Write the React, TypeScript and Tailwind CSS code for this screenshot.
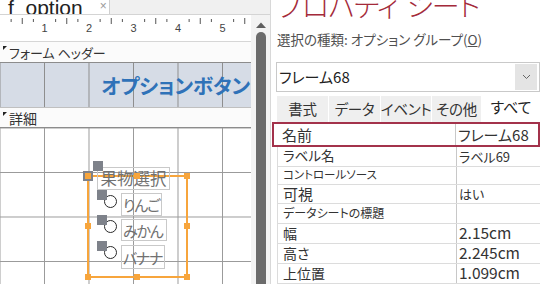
import React from "react";

const font = "[font-family:'Noto_Sans_CJK_JP','Liberation_Sans',sans-serif] [font-feature-settings:'palt']";

type Row = { name: string; value: string; h: string; ns: string; vs: string; hl?: boolean };

const rows: Row[] = [
  { name: "名前", value: "フレーム68", h: "h-[25px]", ns: "text-[15px]", vs: "text-[15px]", hl: true },
  { name: "ラベル名", value: "ラベル69", h: "h-[20px]", ns: "text-[13.5px]", vs: "text-[13px]" },
  { name: "コントロールソース", value: "", h: "h-[18px]", ns: "text-[11.5px]", vs: "text-[13px]" },
  { name: "可視", value: "はい", h: "h-[19px]", ns: "text-[15px]", vs: "text-[13px]" },
  { name: "データシートの標題", value: "", h: "h-[20px]", ns: "text-[12px]", vs: "text-[13px]" },
  { name: "幅", value: "2.15cm", h: "h-[20px]", ns: "text-[14px]", vs: "text-[15.5px]" },
  { name: "高さ", value: "2.245cm", h: "h-[20px]", ns: "text-[14px]", vs: "text-[15.5px]" },
  { name: "上位置", value: "1.099cm", h: "h-[20px]", ns: "text-[14px]", vs: "text-[15.5px]" },
];

function Ruler() {
  const ticks: React.ReactNode[] = [];
  const step = 44.5;
  for (let i = 0; i < 6; i++) {
    const base = i * step;
    [0.25, 0.5, 0.75].forEach((f, k) => {
      const x = base + f * step;
      const long = k === 1;
      ticks.push(
        <line key={`${i}-${k}`} x1={x} x2={x} y1={long ? 2 : 3} y2={long ? 8 : 6} stroke="#555" strokeWidth={1} />
      );
    });
    if (i > 0) {
      ticks.push(
        <text key={`n${i}`} x={base} y={16} fontSize={11} fill="#444" textAnchor="middle" fontFamily="Liberation Sans, sans-serif">
          {i}
        </text>
      );
    }
  }
  return (
    <svg width="251" height="26" className="block">
      {ticks}
    </svg>
  );
}

function Handle({ x, y }: { x: number; y: number }) {
  return <div className="absolute h-[6px] w-[6px] bg-[#f7a53c]" style={{ left: x - 3, top: y - 3 }} />;
}

export default function App() {
  const hy = [48, 98, 149];
  const hx = [88, 137, 187];
  return (
    <div className={`flex h-[284px] w-[540px] overflow-hidden bg-white ${font}`}>
      {/* Left design pane */}
      <div className="flex w-[270px] flex-col">
        <div className="flex h-[15px] border-b border-[#d4d4d4] bg-[#f0f0f0]">
          <div className="flex h-[14px] w-[110px] items-end overflow-hidden border-r border-[#cfcfcf] bg-white">
            <span className="ml-[8px] mb-[-4px] whitespace-nowrap text-[21px] leading-none text-[#222] [font-family:'Liberation_Sans',sans-serif]">f_option</span>
            <span className="ml-[17px] mb-[2px] text-[12px] leading-none text-[#9a9a9a] [font-family:'Liberation_Sans',sans-serif]">×</span>
          </div>
        </div>
        <div className="flex flex-1">
          <div className="flex w-[251px] flex-col">
            <div className="h-[27px] border-b border-[#d6d6d6] bg-white pt-[1px]">
              <Ruler />
            </div>
            <div className="flex h-[21px] items-center border-b border-[#8c8c8c] bg-[#fbfbfb]">
              <span className="ml-[3px] mb-[8px] h-0 w-0 border-t-[4px] border-r-[4px] border-t-[#222] border-r-transparent" />
              <span className="ml-[2px] whitespace-nowrap text-[13px] leading-none text-[#333]">フォーム ヘッダー</span>
            </div>
            <div className="flex h-[44px] items-center justify-end bg-[#d6dce6] bg-[linear-gradient(to_right,#8e8e8e_1px,transparent_1px)] [background-size:44.5px_44.5px] [background-position:44px_0] pr-[1px]">
              <span className="whitespace-nowrap text-[20.5px] font-bold leading-none text-[#2f72b8] [letter-spacing:-0.2px]">オプションボタン</span>
            </div>
            <div className="flex h-[21px] items-center border-b border-t border-[#8c8c8c] border-t-[#c0c0c0] bg-[#fbfbfb]">
              <span className="ml-[3px] mb-[8px] h-0 w-0 border-t-[4px] border-r-[4px] border-t-[#222] border-r-transparent" />
              <span className="ml-[2px] text-[14px] leading-none text-[#333]">詳細</span>
            </div>
            <div className="relative flex-1 bg-white bg-[linear-gradient(to_right,#9a9a9a_1px,transparent_1px),linear-gradient(to_bottom,#9a9a9a_1px,transparent_1px)] [background-size:44.5px_44.5px] [background-position:44px_44px]">
              {/* option group frame */}
              <div className="absolute left-[87px] top-[47px] h-[103px] w-[101px] border-2 border-[#f7a53c]" />
              {/* label */}
              <div className="absolute left-[97px] top-[39px] flex h-[23px] w-[73px] items-center justify-center whitespace-nowrap border border-[#c9c9c9] text-[16.5px] leading-none text-[#717171]">
                果物選択
              </div>
              <div className="absolute left-[93px] top-[33px] h-[10px] w-[10px] bg-[#7e828a]" />
              <div className="absolute left-[83px] top-[43px] h-[10px] w-[10px] bg-[#7e828a]" />
              {[
                { t: 65, w: 41, h: 23, c: 67, s: 62, label: "りんご" },
                { t: 91, w: 46, h: 22, c: 92, s: 87, label: "みかん" },
                { t: 117, w: 44, h: 24, c: 118, s: 113, label: "バナナ" },
              ].map((o) => (
                <React.Fragment key={o.label}>
                  <div
                    className="absolute left-[121px] flex items-center whitespace-nowrap border border-[#c9c9c9] pl-[1px] text-[15px] leading-none text-[#717171] [letter-spacing:-1.2px]"
                    style={{ top: o.t, width: o.w, height: o.h }}
                  >
                    {o.label}
                  </div>
                  <div className="absolute left-[104px] h-[13px] w-[13px] rounded-full border-[1.5px] border-[#2a2a2a] bg-white" style={{ top: o.c }} />
                  <div className="absolute left-[97px] h-[10px] w-[10px] bg-[#7e828a]" style={{ top: o.s }} />
                </React.Fragment>
              ))}
              {hy.map((y) =>
                hx.map((x) => (x === 137 && y === 98 ? null : <Handle key={`${x}-${y}`} x={x} y={y} />))
              )}
            </div>
          </div>
          {/* scrollbar */}
          <div className="flex w-[19px] flex-col items-center bg-[#f3f3f3]">
            <svg width="12" height="8" className="mt-[6px]">
              <path d="M1 7 L6 1.5 L11 7 Z" fill="#5f5f5f" />
            </svg>
            <div className="mt-[3px] w-[10px] flex-1 rounded-t-[5px] bg-[#6b6b6b]" />
          </div>
        </div>
      </div>

      {/* Property sheet */}
      <div className="flex flex-1 flex-col border-l border-[#d8d8d8] pl-[6px]">
        <div className="h-[26px] overflow-hidden">
          <div className="mt-[-9px] whitespace-nowrap text-[28px] font-light leading-none text-[#a42a3a] [letter-spacing:-0.8px]">
            プロパティ<span className="inline-block w-[9px]" />シート
          </div>
        </div>
        <div className="mt-[7px] whitespace-nowrap text-[13.5px] leading-none text-[#505050]">
          選択の種類: オプション グループ(<span className="underline">O</span>)
        </div>
        <div className="mt-[15px] ml-[-1px] flex h-[30px] border border-[#c9c9c9]">
          <div className="flex flex-1 items-center pl-[2px] text-[15px] leading-none text-[#222]">フレーム68</div>
          <div className="my-[1px] mr-[2px] flex w-[22px] items-center justify-center bg-[#e4e4e4]">
            <svg width="9" height="6">
              <path d="M1 1 L4.5 4.5 L8 1" fill="none" stroke="#666" strokeWidth="1" />
            </svg>
          </div>
        </div>
        <div className="mt-[2px] flex h-[28px] items-end">
          {[
            { l: "書式", w: "w-[52px]" },
            { l: "データ", w: "w-[52px]" },
            { l: "イベント", w: "w-[51px]" },
            { l: "その他", w: "w-[50px]" },
          ].map((t) => (
            <div
              key={t.l}
              className={`${t.w} flex h-[26px] items-center justify-center whitespace-nowrap border-r border-white bg-[#efefef] pt-[2px] text-[14.5px] leading-none text-[#333] [letter-spacing:-0.3px]`}
            >
              {t.l}
            </div>
          ))}
          <div className="flex h-[28px] flex-1 items-center justify-center whitespace-nowrap bg-white pb-[2px] text-[15px] leading-none text-[#222]">
            すべて
          </div>
        </div>
        <div className="flex flex-col">
          {rows.map((r) =>
            r.hl ? (
              <div key={r.name} className={`ml-[-5px] flex ${r.h} border-2 border-[#a3324b] text-[#333]`}>
                <div className={`flex w-[181px] items-center whitespace-nowrap pl-[8px] ${r.ns} leading-none`}>{r.name}</div>
                <div className={`flex flex-1 items-center whitespace-nowrap border-l border-[#c8c8c8] pl-[2px] ${r.vs} leading-none`}>{r.value}</div>
              </div>
            ) : (
              <div key={r.name} className={`flex ${r.h} border-b border-l border-[#dcdcdc] text-[#333]`}>
                <div className={`flex w-[178px] items-center whitespace-nowrap pl-[5px] ${r.ns} leading-none`}>{r.name}</div>
                <div className={`flex flex-1 items-center whitespace-nowrap border-l border-[#c8c8c8] pl-[2px] ${r.vs} leading-none`}>{r.value}</div>
              </div>
            )
          )}
        </div>
      </div>
    </div>
  );
}
